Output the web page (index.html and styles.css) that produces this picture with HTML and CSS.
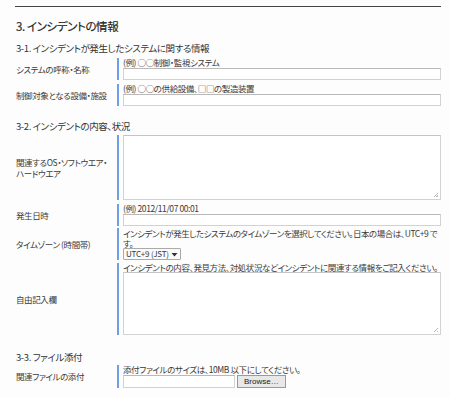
FILE: index.html
```html
<!DOCTYPE html>
<html lang="ja">
<head>
<meta charset="utf-8">
<link rel="stylesheet" href="styles.css">
</head>
<body>
<div class="page">
  <hr class="rule">
  <h2 class="title">3. インシデントの情報</h2>

  <h3 class="sub">3-1. インシデントが発生したシステムに関する情報</h3>
  <div class="row">
    <div class="label">システムの呼称・名称</div>
    <div class="field">
      <div class="hint">(例) ○○制御・監視システム</div>
      <div class="input"></div>
    </div>
  </div>
  <div class="row">
    <div class="label">制御対象となる設備・施設</div>
    <div class="field">
      <div class="hint">(例) ○○の供給設備、□□の製造装置</div>
      <div class="input"></div>
    </div>
  </div>

  <h3 class="sub sub2">3-2. インシデントの内容、状況</h3>
  <div class="row">
    <div class="label">関連するOS・ソフトウエア・<br>ハードウエア</div>
    <div class="field">
      <div class="textarea tall1"><span class="grip"></span></div>
    </div>
  </div>
  <div class="row tight">
    <div class="label">発生日時</div>
    <div class="field">
      <div class="hint">(例) 2012/11/07 00:01</div>
      <div class="input"></div>
    </div>
  </div>
  <div class="row tight2">
    <div class="label">タイムゾーン (時間帯)</div>
    <div class="field">
      <div class="hint multi">インシデントが発生したシステムのタイムゾーンを選択してください。日本の場合は、UTC+9 です。</div>
      <div class="select">UTC+9 (JST)<svg width="7" height="5" viewBox="0 0 7 5"><path d="M0.5 1 L6.5 1 L3.5 4.5 Z" fill="#333"/></svg></div>
    </div>
  </div>
  <div class="row">
    <div class="label">自由記入欄</div>
    <div class="field">
      <div class="hint">インシデントの内容、発見方法、対処状況などインシデントに関連する情報をご記入ください。</div>
      <div class="textarea tall2"><span class="grip"></span></div>
    </div>
  </div>

  <h3 class="sub sub3">3-3. ファイル添付</h3>
  <div class="row">
    <div class="label">関連ファイルの添付</div>
    <div class="field">
      <div class="hint">添付ファイルのサイズは、10MB 以下にしてください。</div>
      <div class="file"><span class="filebox"></span><span class="browse">Browse…</span></div>
    </div>
  </div>
</div>
</body>
</html>
```

FILE: styles.css
```css
html, body {
  margin: 0;
  padding: 0;
  background: #fdfdfd;
}
body {
  font-family: "Noto Sans CJK JP", "Liberation Sans", sans-serif;
  font-feature-settings: "palt";
  color: #3a3a3a;
  font-size: 8.5px;
  letter-spacing: -0.4px;
}
.page {
  padding: 6px 9px 0 15px;
}
.rule {
  margin: 0;
  border: 0;
  border-top: 1px solid #444;
  height: 0;
}
.title {
  margin: 11px 0 0 1px;
  font-size: 11.5px;
  font-weight: normal;
  line-height: 16px;
  color: #222;
  -webkit-text-stroke: 0.15px #222;
}
.sub {
  margin: 8px 0 3px 1px;
  font-size: 9.5px;
  font-weight: normal;
  line-height: 13px;
  color: #333;
}
.sub2 { margin-top: 14px; margin-bottom: 2px; }
.sub3 { margin-top: 16px; margin-bottom: 1px; }
.row {
  display: flex;
  align-items: center;
  margin-bottom: 4px;
}
.row.tight { margin-bottom: 2px; }
.row.tight2 { margin-bottom: 3px; }
.label {
  flex: 0 0 101px;
  padding-left: 1px;
  line-height: 11px;
  white-space: nowrap;
}
.field {
  flex: 1 1 auto;
  min-width: 0;
  border-left: 2px solid #6e9fe6;
  padding-left: 4px;
  display: flex;
  flex-direction: column;
}
.hint {
  line-height: 9px;
  height: 9px;
  white-space: nowrap;
}
.hint.multi {
  white-space: normal;
  height: auto;
  line-height: 10px;
  letter-spacing: -0.45px;
}
.input {
  height: 10px;
  border: 1px solid #d2d2d2;
  border-top-color: #b9b9b9;
  background: #fff;
  margin-top: 1px;
}
.textarea {
  position: relative;
  border: 1px solid #d2d2d2;
  border-top-color: #c4c4c4;
  background: #fff;
}
.tall1 { height: 63px; }
.tall2 { height: 61px; }
.grip {
  position: absolute;
  right: 2px;
  bottom: 2px;
  width: 5px;
  height: 5px;
  background: linear-gradient(135deg, transparent 55%, #bbb 55%, #bbb 65%, transparent 65%, transparent 80%, #bbb 80%);
}
.select {
  display: flex;
  align-items: center;
  gap: 2px;
  align-self: flex-start;
  height: 10px;
  padding: 0 2px;
  border: 1px solid #aaa;
  border-radius: 1px;
  background: #fafafa;
  line-height: 10px;
  font-size: 8px;
  letter-spacing: -0.2px;
}
.file {
  display: flex;
  align-items: center;
  gap: 2px;
  margin-top: 1px;
}
.filebox {
  width: 110px;
  height: 11px;
  border: 1px solid #d2d2d2;
  border-top-color: #b9b9b9;
  background: #fff;
}
.browse {
  height: 11px;
  line-height: 11px;
  padding: 0 6px;
  border: 1px solid #999;
  background: #e8e8e8;
  color: #222;
  font-family: "Liberation Sans", sans-serif;
  font-size: 8px;
  letter-spacing: 0;
}
```
